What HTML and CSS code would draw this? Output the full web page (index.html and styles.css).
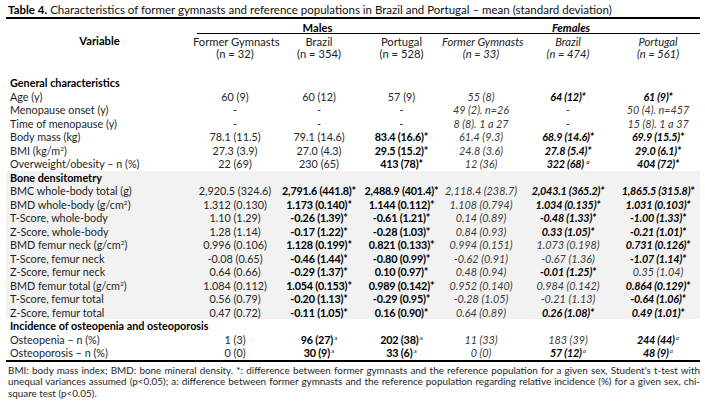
FILE: index.html
```html
<!DOCTYPE html>
<html lang="en">
<head>
<meta charset="utf-8">
<title>Table 4</title>
<link rel="stylesheet" href="styles.css">
</head>
<body>
<div class="page">
  <p class="caption"><b>Table 4.</b> Characteristics of former gymnasts and reference populations in Brazil and Portugal – mean (standard deviation)</p>
  <table class="data">
    <colgroup>
      <col class="c-var"><col class="c1"><col class="c2"><col class="c3"><col class="c4"><col class="c5"><col class="c6">
    </colgroup>
    <thead>
      <tr class="h1">
        <th rowspan="2" class="var-head">Variable</th>
        <th colspan="3" class="group first-group">Males</th>
        <th colspan="3" class="group fem">Females</th>
      </tr>
      <tr class="h2">
        <th>Former Gymnasts<br>(n = 32)</th>
        <th>Brazil<br>(n = 354)</th>
        <th>Portugal<br>(n = 528)</th>
        <th class="fem">Former Gymnasts<br>(n = 33)</th>
        <th class="fem">Brazil<br>(n = 474)</th>
        <th class="fem">Portugal<br>(n = 561)</th>
      </tr>
    </thead>
    <tbody>
      <tr class="section"><td colspan="7">General characteristics</td></tr>
      <tr><td>Age (y)</td><td>60 (9)</td><td>60 (12)</td><td>57 (9)</td><td class="f">55 (8)</td><td class="f b">64 (12)*</td><td class="f b">61 (9)*</td></tr>
      <tr><td>Menopause onset (y)</td><td>-</td><td>-</td><td>-</td><td class="f">49 (2). n=26</td><td class="f">-</td><td class="f">50 (4). n=457</td></tr>
      <tr><td>Time of menopause (y)</td><td>-</td><td>-</td><td>-</td><td class="f">8 (8). 1 a 27</td><td class="f">-</td><td class="f">15 (8). 1 a 37</td></tr>
      <tr><td>Body mass (kg)</td><td>78.1 (11.5)</td><td>79.1 (14.6)</td><td class="b">83.4 (16.6)*</td><td class="f">61.4 (9.3)</td><td class="f b">68.9 (14.6)*</td><td class="f b">69.9 (15.5)*</td></tr>
      <tr><td>BMI (kg/m<sup>2</sup>)</td><td>27.3 (3.9)</td><td>27.0 (4.3)</td><td class="b">29.5 (15.2)*</td><td class="f">24.8 (3.6)</td><td class="f b">27.8 (5.4)*</td><td class="f b">29.0 (6.1)*</td></tr>
      <tr><td>Overweight/obesity – n (%)</td><td>22 (69)</td><td>230 (65)</td><td class="b">413 (78)*</td><td class="f">12 (36)</td><td class="f b">322 (68) <sup>a</sup></td><td class="f b">404 (72)*</td></tr>
    </tbody>
    <tbody class="shaded">
      <tr class="section"><td colspan="7">Bone densitometry</td></tr>
      <tr><td>BMC whole-body total (g)</td><td>2,920.5 (324.6)</td><td class="b">2,791.6 (441.8)*</td><td class="b">2,488.9 (401.4)*</td><td class="f">2,118.4 (238.7)</td><td class="f b">2,043.1 (365.2)*</td><td class="f b">1,865.5 (315.8)*</td></tr>
      <tr><td>BMD whole-body (g/cm<sup>2</sup>)</td><td>1.312 (0.130)</td><td class="b">1.173 (0.140)*</td><td class="b">1.144 (0.112)*</td><td class="f">1.108 (0.794)</td><td class="f b">1.034 (0.135)*</td><td class="f b">1.031 (0.103)*</td></tr>
      <tr><td>T-Score, whole-body</td><td>1.10 (1.29)</td><td class="b">-0.26 (1.39)*</td><td class="b">-0.61 (1.21)*</td><td class="f">0.14 (0.89)</td><td class="f b">-0.48 (1.33)*</td><td class="f b">-1.00 (1.33)*</td></tr>
      <tr><td>Z-Score, whole-body</td><td>1.28 (1.14)</td><td class="b">-0.17 (1.22)*</td><td class="b">-0.28 (1.03)*</td><td class="f">0.84 (0.93)</td><td class="f b">0.33 (1.05)*</td><td class="f b">-0.21 (1.01)*</td></tr>
      <tr><td>BMD femur neck (g/cm<sup>2</sup>)</td><td>0.996 (0.106)</td><td class="b">1.128 (0.199)*</td><td class="b">0.821 (0.133)*</td><td class="f">0.994 (0.151)</td><td class="f">1.073 (0.198)</td><td class="f b">0.731 (0.126)*</td></tr>
      <tr><td>T-Score, femur neck</td><td>-0.08 (0.65)</td><td class="b">-0.46 (1.44)*</td><td class="b">-0.80 (0.99)*</td><td class="f">-0.62 (0.91)</td><td class="f">-0.67 (1.36)</td><td class="f b">-1.07 (1.14)*</td></tr>
      <tr><td>Z-Score, femur neck</td><td>0.64 (0.66)</td><td class="b">-0.29 (1.37)*</td><td class="b">0.10 (0.97)*</td><td class="f">0.48 (0.94)</td><td class="f b">-0.01 (1.25)*</td><td class="f">0.35 (1.04)</td></tr>
      <tr><td>BMD femur total (g/cm<sup>2</sup>)</td><td>1.084 (0.112)</td><td class="b">1.054 (0.153)*</td><td class="b">0.989 (0.142)*</td><td class="f">0.952 (0.140)</td><td class="f">0.984 (0.142)</td><td class="f b">0.864 (0.129)*</td></tr>
      <tr><td>T-Score, femur total</td><td>0.56 (0.79)</td><td class="b">-0.20 (1.13)*</td><td class="b">-0.29 (0.95)*</td><td class="f">-0.28 (1.05)</td><td class="f">-0.21 (1.13)</td><td class="f b">-0.64 (1.06)*</td></tr>
      <tr><td>Z-Score, femur total</td><td>0.47 (0.72)</td><td class="b">-0.11 (1.05)*</td><td class="b">0.16 (0.90)*</td><td class="f">0.64 (0.89)</td><td class="f b">0.26 (1.08)*</td><td class="f b">0.49 (1.01)*</td></tr>
    </tbody>
    <tbody class="last">
      <tr class="section"><td colspan="7">Incidence of osteopenia and osteoporosis</td></tr>
      <tr><td>Osteopenia – n (%)</td><td>1 (3)</td><td><b>96 (27)</b><sup>a</sup></td><td><b>202 (38)</b><sup>a</sup></td><td class="f">11 (33)</td><td class="f">183 (39)</td><td class="f"><b>244 (44)</b><sup>a</sup></td></tr>
      <tr><td>Osteoporosis – n (%)</td><td>0 (0)</td><td><b>30 (9)</b><sup>a</sup></td><td><b>33 (6)</b><sup>a</sup></td><td class="f">0 (0)</td><td class="f"><b>57 (12)</b><sup>a</sup></td><td class="f"><b>48 (9)</b><sup>a</sup></td></tr>
    </tbody>
  </table>
  <p class="note">BMI: body mass index; BMD: bone mineral density. *: difference between former gymnasts and the reference population for a given sex, Student's t&#8209;test with unequal variances assumed (p&lt;0.05); a: difference between former gymnasts and the reference population regarding relative incidence (%) for a given sex, chi-square test (p&lt;0.05).</p>
</div>
</body>
</html>
```

FILE: styles.css
```css
html, body {
  margin: 0;
  padding: 0;
  background: #ffffff;
}

body {
  font-family: Lato, "Open Sans", "Liberation Sans", sans-serif;
  font-size: 11px;
  color: #262626;
}

.page {
  padding: 3px 5px 0 6px;
  width: 694px;
}

.caption {
  margin: 0 0 0 2px;
  font-size: 11.5px;
  line-height: 13px;
  color: #111;
}

.caption b {
  font-weight: 700;
  color: #000;
}

.data {
  width: 694px;
  border-collapse: collapse;
  table-layout: fixed;
  border-top: 2.5px solid #000;
  border-bottom: 2.5px solid #000;
  margin-top: 1px;
}

.c-var { width: 187px; }
.c1 { width: 84px; }
.c2 { width: 84px; }
.c3 { width: 81px; }
.c4 { width: 78px; }
.c5 { width: 96px; }
.c6 { width: 84px; }

.data th {
  font-weight: 400;
  text-align: center;
  padding: 0;
  color: #222;
  white-space: nowrap;
  font-size: 11.2px;
}

.data .h1 th {
  line-height: 13px;
  padding-top: 2px;
}

.data .h1 .group {
  font-weight: 700;
  color: #000;
  background: linear-gradient(#000, #000) no-repeat right bottom / 100% 1px;
}

.data .h1 .first-group {
  background-size: calc(100% - 4px) 1px;
}

.data .h1 .fem {
  font-style: italic;
}

.data .var-head {
  font-weight: 700;
  color: #000;
  vertical-align: middle;
  padding-bottom: 16px;
}

.data .h2 th {
  line-height: 12px;
  padding-top: 2px;
  padding-bottom: 16px;
}

.data .h2 .fem {
  font-style: italic;
}

.data td {
  padding: 0;
  font-size: 10.8px;
  line-height: 13.5px;
  height: 13.5px;
  text-align: center;
  white-space: nowrap;
}

.data td:first-child {
  text-align: left;
  padding-left: 4px;
  color: #1e1e1e;
}

.data .section td {
  font-weight: 700;
  color: #000;
  text-align: left;
}

.data .b,
.data td b {
  font-weight: 700;
  color: #000;
  letter-spacing: -0.2px;
}

.data .f {
  font-style: italic;
  color: #3a3a3a;
}

.data .f.b,
.data .f b {
  color: #000;
}

.shaded tr {
  background: #f2f2f2;
}

sup {
  font-size: 6.5px;
  line-height: 0;
  vertical-align: 4px;
  font-weight: 400;
}

.data td b + sup {
  margin-left: 1px;
}

.note {
  margin: 3px 0 0 2px;
  font-size: 9.9px;
  line-height: 11.8px;
  text-align: justify;
  color: #1e1e1e;
}
```
